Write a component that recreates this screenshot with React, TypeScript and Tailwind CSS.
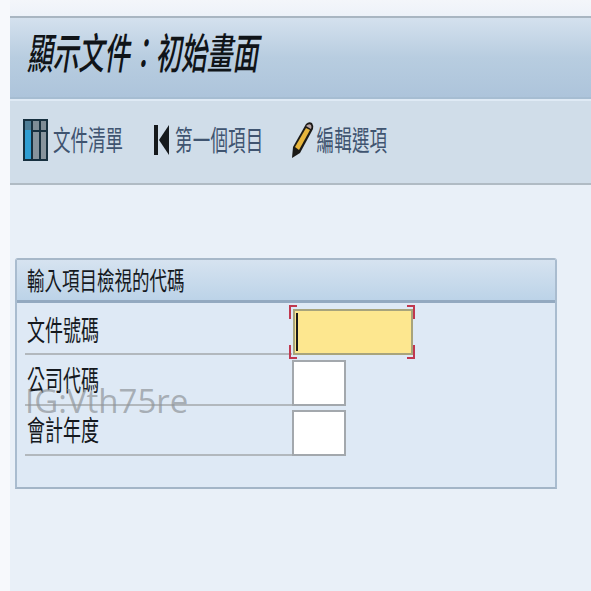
export default function App() {
  const font = { fontFamily: '"Noto Sans CJK TC", "Liberation Sans", sans-serif' };
  const rows = ["文件號碼", "公司代碼", "會計年度"];
  return (
    <div className="relative flex h-[591px] w-[591px] overflow-hidden bg-[#f6f8fb]" style={font}>
      <div className="w-[10px] shrink-0 bg-[#f7f9fc]" />
      <div className="flex min-w-0 flex-1 flex-col bg-[#e9f0f8]">
        <div className="h-[16px] bg-gradient-to-b from-[#f4f6fa] to-[#edf2f9]" />
        <header className="flex h-[83px] items-center border-y-2 border-t-[#a9b6c2] border-b-[#a6bdd2] bg-gradient-to-b from-[#d4e1ee] via-[#b8cde0] to-[#adc4db] pb-[14px] pl-[17px]">
          <h1 className="inline-block origin-center scale-y-[1.65] text-[25.7px] font-medium italic leading-none text-[#101418]">顯示文件：初始畫面</h1>
        </header>
        <nav className="flex h-[86px] items-center border-t-2 border-b-2 border-t-[#dfeaf5] border-b-[#b0bbc4] bg-[#d0dde9] pb-[4px] pl-[13px] text-[17.5px] text-[#3f5470]">
          <svg width="25" height="42" viewBox="0 0 25 42" className="shrink-0">
            <rect width="25" height="42" fill="#17303f" />
            <rect x="2" y="2" width="6" height="38" fill="#2f9ed3" />
            <rect x="2" y="2" width="6" height="9" fill="#4e7d96" />
            <rect x="10" y="2" width="6" height="9" fill="#7e8c96" />
            <rect x="18" y="2" width="5" height="9" fill="#7e8c96" />
            <rect x="10" y="13" width="6" height="27" fill="#87949d" />
            <rect x="18" y="13" width="5" height="27" fill="#87949d" />
          </svg>
          <span className="ml-[5px] inline-block scale-y-[1.6]">文件清單</span>
          <svg width="15" height="32" viewBox="0 0 15 32" className="ml-[31px] shrink-0">
            <rect x="0" y="1" width="4" height="30" fill="#15191c" />
            <path d="M15 1 L5 16 L15 31 Z" fill="#15191c" />
          </svg>
          <span className="ml-[6px] inline-block scale-y-[1.6] tracking-[0.2px]">第一個項目</span>
          <svg width="23" height="38" viewBox="0 0 23 38" className="ml-[27px] shrink-0">
            <path d="M1 37 L2 26 L15 3 Q18 0 21 2 Q23 5 22 8 L9 32 Z" fill="#1b1a17" />
            <path d="M4 26 L15 7 L19 9 L8 29 Z" fill="#e6b53c" />
            <path d="M15 5 Q18 2 20 4 Q21 6 20 8 Z" fill="#b9a6a6" />
          </svg>
          <span className="ml-[3px] inline-block scale-y-[1.6] tracking-[0.2px]">編輯選項</span>
        </nav>
        <section className="ml-[5px] mt-[73px] h-[231px] w-[542px] rounded-t-[3px] border-2 border-t-[#a7b8c9] border-x-[#a9bccf] border-b-[#a3b5c7] bg-[#dee9f5]">
          <div className="flex h-[43px] items-center border-b-[3px] border-[#93a9c0] bg-gradient-to-b from-[#d6e3f0] to-[#bcd3e8] pl-[10px] text-[17.5px] text-[#15191e]">
            <span className="inline-block scale-y-[1.45]">輸入項目檢視的代碼</span>
          </div>
          <div className="flex flex-col pl-[8px] pt-[2px]">
            {rows.map((label, i) => (
              <div key={label} className="flex h-[50.25px] items-end">
                <div className="flex h-full w-[267px] items-center border-b-2 border-[#b2b8bd] pl-[2px] text-[18px] text-[#15191e]">
                  <span className="inline-block scale-y-[1.55]">{label}</span>
                </div>
                {i === 0 ? (
                  <div className="relative ml-[1px] h-[46px] w-[120px] border-2 border-[#a8a47c] bg-[#fde78f]">
                    <div className="ml-[1px] mt-[2px] h-[38px] w-[1.5px] bg-[#1a1a1a]" />
                    <div className="absolute -left-[6px] -top-[6px] h-[14px] w-[8px] border-l-2 border-t-2 border-[#c0384f]" />
                    <div className="absolute -right-[4px] -top-[6px] h-[14px] w-[8px] border-r-2 border-t-2 border-[#c0384f]" />
                    <div className="absolute -bottom-[6px] -left-[6px] h-[14px] w-[8px] border-b-2 border-l-2 border-[#c0384f]" />
                    <div className="absolute -bottom-[6px] -right-[4px] h-[14px] w-[8px] border-b-2 border-r-2 border-[#c0384f]" />
                  </div>
                ) : (
                  <div className="h-[45.5px] w-[54px] border-2 border-[#a3a8ad] bg-white" />
                )}
              </div>
            ))}
          </div>
        </section>
      </div>
      <div className="absolute left-[25px] top-[379px] text-[33px] leading-[44px] text-[#8f9499]/70" style={{ fontFamily: '"Open Sans", sans-serif' }}>IG:Vth75re</div>
    </div>
  );
}
